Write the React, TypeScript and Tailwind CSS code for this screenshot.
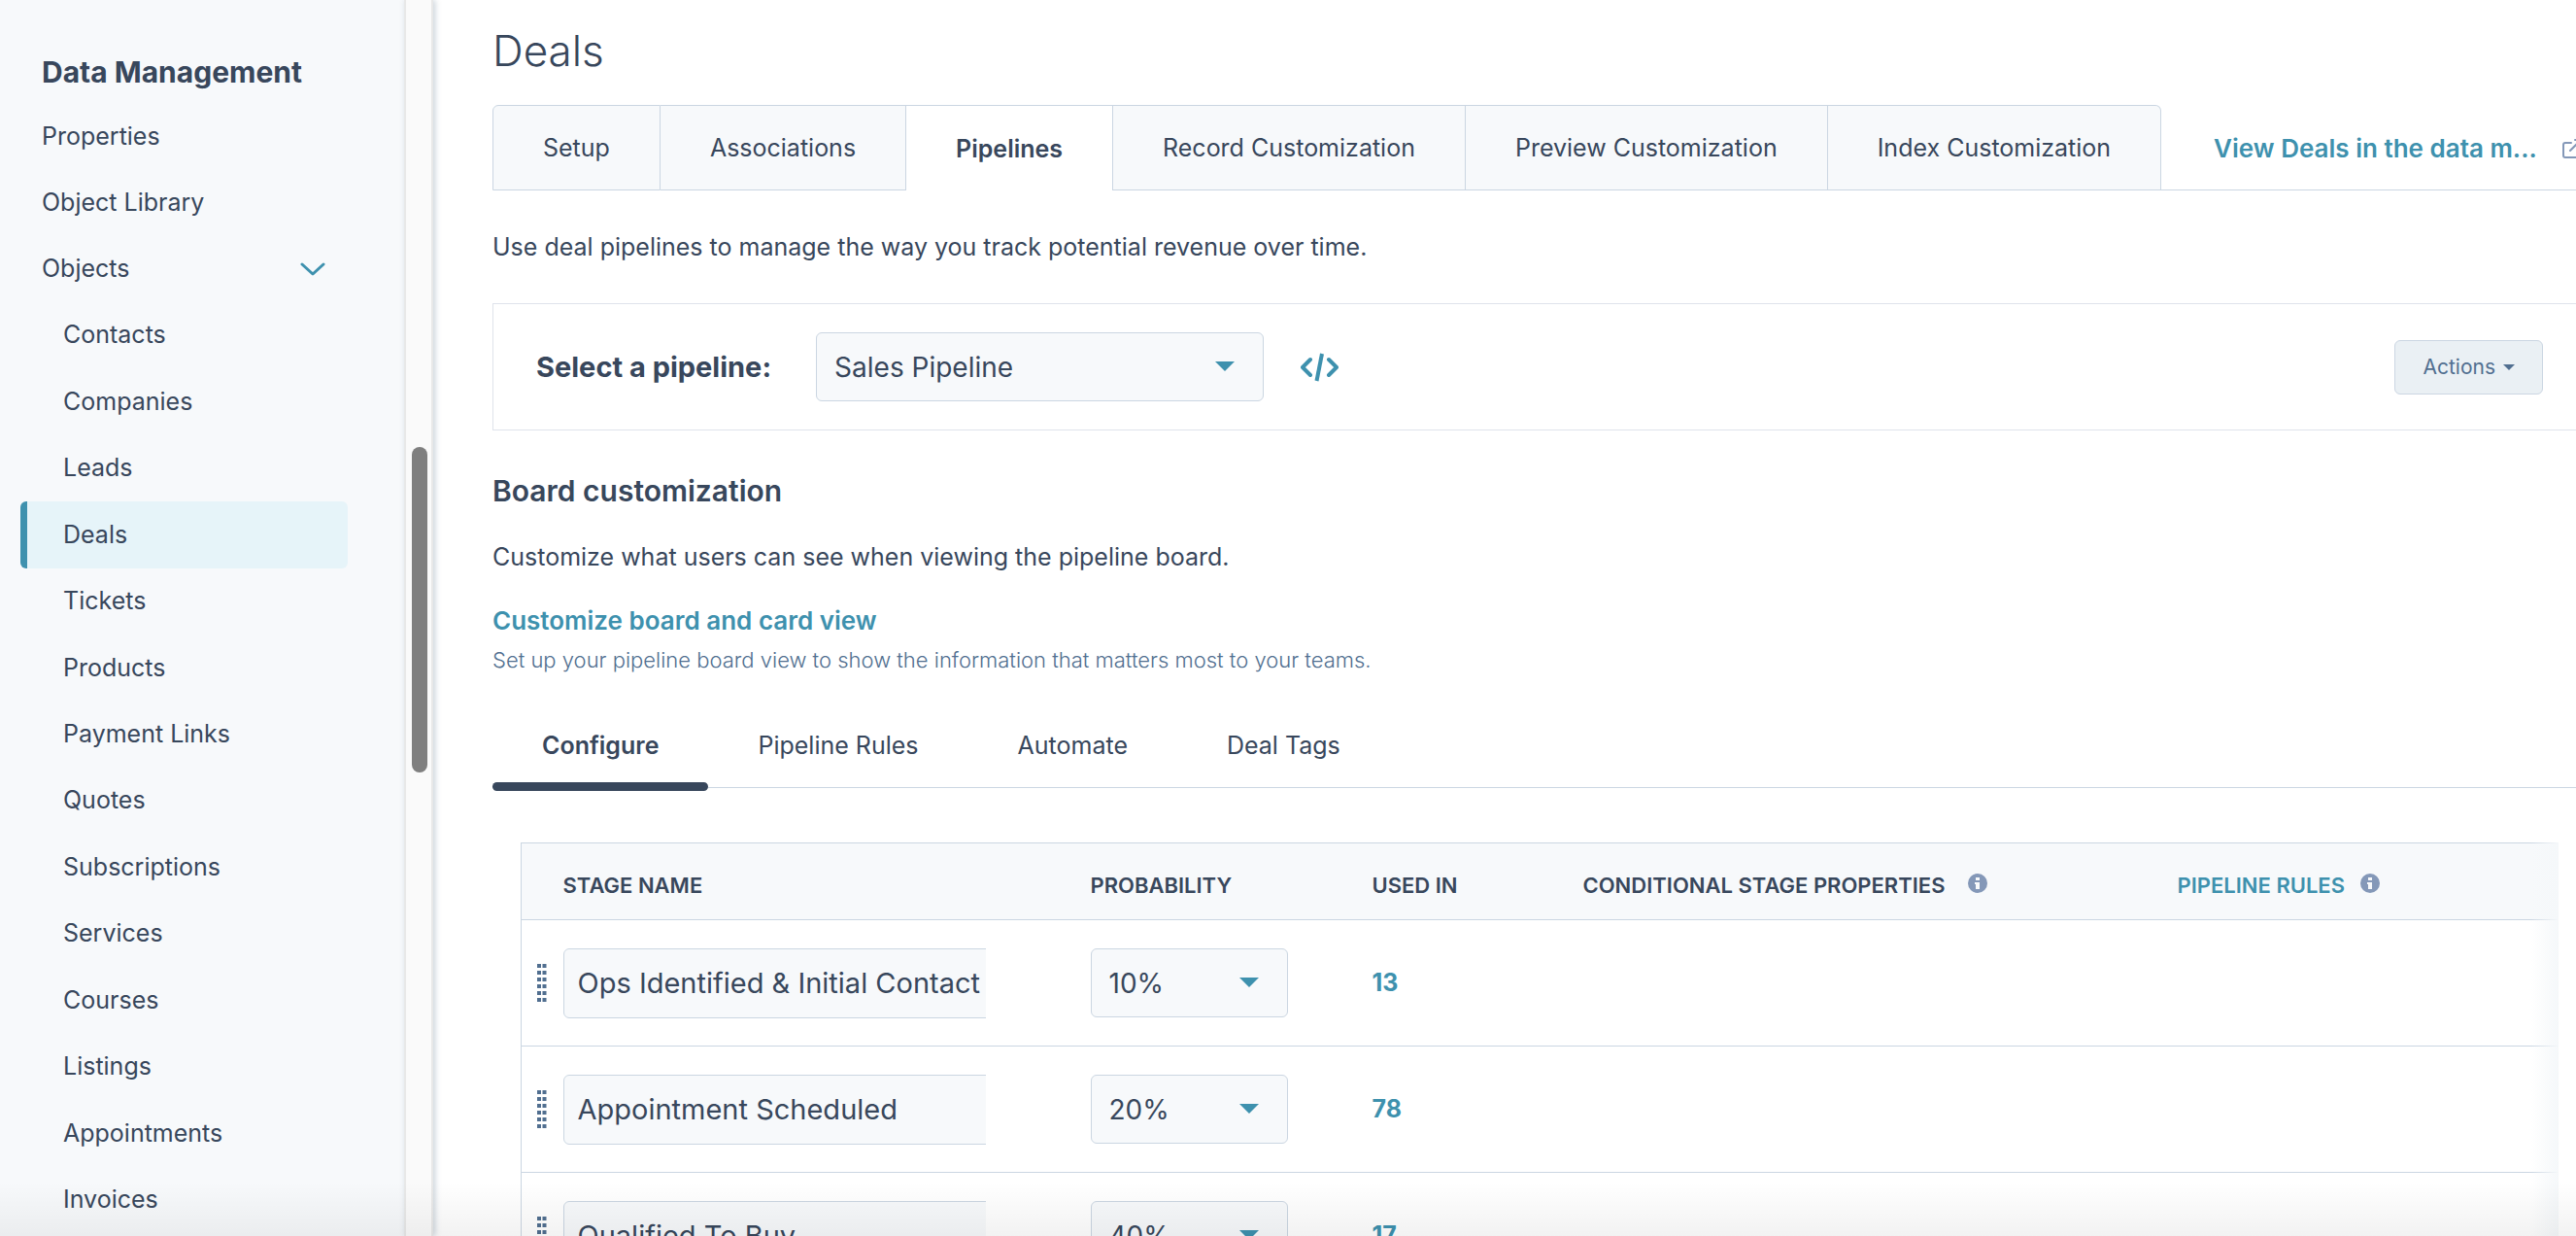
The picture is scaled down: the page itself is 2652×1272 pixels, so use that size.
import React from 'react';
import { ExternalLink } from 'lucide-react';

interface Stage {
  name: string;
  probability: string;
  usedIn: number;
}

const topLinks = ['Properties', 'Object Library'];

const objectLinks = [
  'Contacts',
  'Companies',
  'Leads',
  'Deals',
  'Tickets',
  'Products',
  'Payment Links',
  'Quotes',
  'Subscriptions',
  'Services',
  'Courses',
  'Listings',
  'Appointments',
  'Invoices',
];

const objectTabs = [
  'Setup',
  'Associations',
  'Pipelines',
  'Record Customization',
  'Preview Customization',
  'Index Customization',
];

const pipelineTabs = ['Configure', 'Pipeline Rules', 'Automate', 'Deal Tags'];

const stages: Stage[] = [
  { name: 'Ops Identified & Initial Contact', probability: '10%', usedIn: 13 },
  { name: 'Appointment Scheduled', probability: '20%', usedIn: 78 },
  { name: 'Qualified To Buy', probability: '40%', usedIn: 17 },
];

const InfoIcon: React.FC = () => (
  <svg viewBox="0 0 20 20" className="mb-1 size-5 shrink-0" aria-hidden="true">
    <circle cx="10" cy="10" r="10" fill="#8498b8" />
    <rect x="8" y="4" width="4" height="3" fill="#f7f9fb" />
    <path d="M7 9 H12 V16 H8 V11 H7 Z" fill="#f7f9fb" />
  </svg>
);

const CodeIcon: React.FC = () => (
  <svg
    viewBox="0 0 39 30"
    className="h-[30px] w-[39px]"
    fill="none"
    stroke="#3e91ae"
    strokeWidth="4"
    strokeLinecap="round"
    strokeLinejoin="round"
    aria-hidden="true"
  >
    <path d="M10 7 L2 15 L10 23" />
    <path d="M22 1 L16.500 29" strokeLinecap="butt" />
    <path d="M29 7 L37 15 L29 23" />
  </svg>
);

const GripIcon: React.FC = () => (
  <svg viewBox="0 0 10 40" className="h-10 w-[10px]" fill="#516f90" aria-hidden="true">
    {[0, 7, 14, 21, 28, 35].map((y) => (
      <React.Fragment key={y}>
        <rect x="0" y={y} width="4" height="4" />
        <rect x="5.500" y={y} width="4" height="4" />
      </React.Fragment>
    ))}
  </svg>
);

interface SelectBoxProps {
  id?: string;
  label?: string;
  value: string;
  className: string;
}

const SelectBox: React.FC<SelectBoxProps> = ({ id, label, value, className }) => (
  <div className={`relative ${className}`}>
    <select
      id={id}
      aria-label={label}
      defaultValue={value}
      className="h-[71px] w-full appearance-none rounded-md border border-[#cbd6e2] bg-[#f7f9fb] pr-12 pl-[18px] text-[28px]"
    >
      <option>{value}</option>
    </select>
    <svg
      viewBox="0 0 20 10"
      className="pointer-events-none absolute top-[30px] right-[30px] h-[10px] w-5"
      aria-hidden="true"
    >
      <path d="M0 0 H20 L10 10 Z" fill="#3e91ae" />
    </svg>
  </div>
);

const Sidebar: React.FC = () => (
  <aside className="flex shrink-0">
    <nav className="flex w-[416px] flex-col bg-[#f7f9fb] pt-12 pb-[3px] text-[25px]">
      <h2 className="mb-[7px] pl-[43px] text-[30px] leading-[52px] font-bold">Data Management</h2>
      {topLinks.map((link) => (
        <a key={link} href="#" className="flex h-[68px] items-center pl-[43px]">
          {link}
        </a>
      ))}
      <button
        type="button"
        aria-expanded="true"
        className="flex h-[68px] items-center justify-between pr-[81px] pl-[43px] text-left"
      >
        Objects
        <svg
          viewBox="0 0 26 16"
          className="h-4 w-[26px]"
          fill="none"
          stroke="#3e91ae"
          strokeWidth="3"
          strokeLinecap="round"
          strokeLinejoin="round"
          aria-hidden="true"
        >
          <path d="M2 3 L13 13 L24 3" />
        </svg>
      </button>
      <ul className="grid flex-1 auto-rows-fr pr-[58px] pl-[21px]">
        {objectLinks.map((link) => (
          <li key={link} className="flex">
            <a
              href="#"
              aria-current={link === 'Deals' ? 'page' : undefined}
              className={
                link === 'Deals'
                  ? 'flex w-full items-center rounded-md border-l-[7px] border-[#3e91ae] bg-[#e6f4f9] pl-[37px]'
                  : 'flex w-full items-center pl-11'
              }
            >
              {link}
            </a>
          </li>
        ))}
      </ul>
    </nav>
    {/* scroll track */}
    <div className="w-[30px] border-x-2 border-[#e8e8e8] bg-[#fafafa] pt-[460px] pr-1 pl-[6px] shadow-[2px_0_6px_rgba(45,80,110,0.25)]">
      <div className="h-[335px] rounded-full bg-[#7f7f7f]" />
    </div>
  </aside>
);

const ObjectTabs: React.FC = () => (
  <div className="flex h-[88px] text-[25px] whitespace-nowrap">
    {objectTabs.map((tab) => (
      <button
        key={tab}
        type="button"
        className={
          tab === 'Pipelines'
            ? 'border-t border-r border-[#cbd6e2] px-[51px] pt-0.5 font-semibold'
            : 'border-y border-r border-[#cbd6e2] bg-[#f7f9fb] px-[51px] pt-0.5 first:rounded-tl-md first:border-l nth-6:rounded-tr-md'
        }
      >
        {tab}
      </button>
    ))}
    <div className="flex flex-1 items-center border-b border-[#cbd6e2] pt-0.5 pl-[54px]">
      <a href="#" className="flex items-center gap-6 text-[26px] font-semibold text-[#3e91ae]">
        View Deals in the data m...
        <ExternalLink className="size-6 shrink-0 text-[#8498b8]" />
      </a>
    </div>
  </div>
);

const PipelineBar: React.FC = () => (
  <div className="mt-10 flex h-[131px] items-center border-y border-l border-[#dfe3eb] pr-[34px] pl-11">
    <label htmlFor="pipeline" className="text-[29px] font-bold">
      Select a pipeline:
    </label>
    <SelectBox id="pipeline" value="Sales Pipeline" className="ml-[46px] w-[461px]" />
    <button type="button" aria-label="View code" className="ml-[38px]">
      <CodeIcon />
    </button>
    <button
      type="button"
      className="ml-auto flex h-14 items-center gap-2 rounded-md border border-[#cbd6e2] bg-[#eaf0f4] px-7 text-[21px] text-[#516f90]"
    >
      Actions
      <svg viewBox="0 0 12 6" className="h-[6px] w-3" aria-hidden="true">
        <path d="M0 0 H12 L6 6 Z" fill="#516f90" />
      </svg>
    </button>
  </div>
);

const PipelineTabs: React.FC = () => (
  <div className="mt-[30px] flex border-b border-[#cbd6e2] text-[25px]">
    {pipelineTabs.map((tab) => (
      <button
        key={tab}
        type="button"
        className={
          tab === 'Configure'
            ? 'relative h-[83px] px-[51px] pb-0.5 font-semibold'
            : 'h-[83px] px-[51px] pb-0.5'
        }
      >
        {tab}
        {tab === 'Configure' && (
          <span className="absolute inset-x-0 -bottom-1 h-[9px] rounded-full bg-[#38475c]" />
        )}
      </button>
    ))}
  </div>
);

const StageTable: React.FC = () => (
  <div className="relative mt-14 mr-[18px] ml-[29px]">
    <table className="w-full table-fixed border-collapse border-t border-l border-[#cbd6e2] text-left">
      <thead className="bg-[#f7f9fb] text-[22px]">
        <tr className="h-[79px] border-b border-[#cbd6e2]">
          <th className="w-[43px]" />
          <th className="w-[543px] pt-2 font-semibold">STAGE NAME</th>
          <th className="w-[290px] pt-2 font-semibold">PROBABILITY</th>
          <th className="w-[217px] pt-2 font-semibold">USED IN</th>
          <th className="w-[612px] pt-2 font-semibold">
            <span className="flex items-center gap-6">
              CONDITIONAL STAGE PROPERTIES
              <InfoIcon />
            </span>
          </th>
          <th className="pt-2 font-semibold">
            <span className="flex items-center gap-4">
              <a href="#" className="text-[#3e91ae]">
                PIPELINE RULES
              </a>
              <InfoIcon />
            </span>
          </th>
        </tr>
      </thead>
      <tbody>
        {stages.map((stage) => (
          <tr key={stage.name} className="h-[130px] border-b border-[#cbd6e2]">
            <td className="pl-4">
              <GripIcon />
            </td>
            <td>
              <div className="w-[435px] overflow-hidden">
                <input
                  type="text"
                  aria-label="Stage name"
                  defaultValue={stage.name}
                  className="h-[72px] w-[480px] rounded-md border border-[#cbd6e2] bg-[#f7f9fb] px-[14px] text-[29px]"
                />
              </div>
            </td>
            <td>
              <SelectBox label="Probability" value={stage.probability} className="w-[203px]" />
            </td>
            <td>
              <a href="#" className="text-[25px] font-bold text-[#3e91ae]">
                {stage.usedIn}
              </a>
            </td>
            <td />
            <td />
          </tr>
        ))}
      </tbody>
    </table>
    <div className="pointer-events-none absolute inset-y-0 right-0 w-7 bg-linear-to-r from-[#f5f8fa]/0 to-[#f5f8fa]" />
  </div>
);

const App: React.FC = () => {
  return (
    <div className="relative flex h-screen overflow-hidden bg-white font-['Inter',sans-serif] text-[#38475c]">
      <Sidebar />
      <main className="min-w-0 flex-1 overflow-hidden pt-6 pl-[61px]">
        <h1 className="mb-7 text-[44px] leading-[56px] font-light">Deals</h1>
        <ObjectTabs />
        <p className="mt-10 text-[25px] leading-9">
          Use deal pipelines to manage the way you track potential revenue over time.
        </p>
        <PipelineBar />
        <h2 className="mt-11 text-[30px] leading-9 font-semibold">Board customization</h2>
        <p className="mt-8 text-[25px] leading-9">
          Customize what users can see when viewing the pipeline board.
        </p>
        <a href="#" className="mt-[30px] block text-[26px] leading-9 font-semibold text-[#3e91ae]">
          Customize board and card view
        </a>
        <p className="mt-1 text-[22px] leading-9 font-light text-[#516f90]">
          Set up your pipeline board view to show the information that matters most to your teams.
        </p>
        <PipelineTabs />
        <StageTable />
      </main>
      <div className="pointer-events-none absolute inset-x-0 bottom-0 h-14 bg-linear-to-b from-black/0 to-black/5" />
    </div>
  );
};

export default App;
